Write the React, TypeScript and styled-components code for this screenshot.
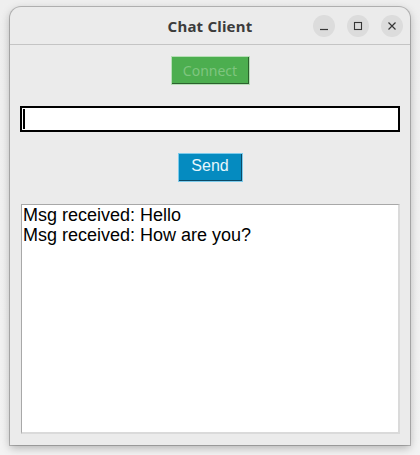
import React from "react";
import styled, { createGlobalStyle } from "styled-components";

const Global = createGlobalStyle`
  html, body { margin: 0; padding: 0; }
  body {
    width: 420px;
    height: 455px;
    background: #f4f4f4;
    overflow: hidden;
    font-family: "Liberation Sans", Arial, sans-serif;
  }
`;

const Page = styled.div`
  width: 420px;
  height: 455px;
  box-sizing: border-box;
  padding: 7px 10px 10px 10px;
  background: linear-gradient(#efefef, #f3f3f3);
`;

const Window = styled.div`
  width: 400px;
  height: 438px;
  display: flex;
  flex-direction: column;
  background: #ebebeb;
  border-radius: 11px 11px 0 0;
  box-shadow: 0 0 0 1px rgba(0, 0, 0, 0.22), 0 3px 10px rgba(0, 0, 0, 0.28);
`;

const TitleBar = styled.div`
  height: 37px;
  flex: none;
  display: grid;
  grid-template-columns: 1fr auto 1fr;
  align-items: center;
  border-bottom: 1px solid #c4c4c4;
`;

const Title = styled.div`
  grid-column: 2;
  font-family: "Noto Sans", "Open Sans", sans-serif;
  font-weight: 700;
  font-size: 15px;
  letter-spacing: 0.2px;
  color: #3c3c3c;
  margin-top: 1px;
`;

const Controls = styled.div`
  grid-column: 3;
  justify-self: end;
  display: flex;
  gap: 12px;
  padding-right: 7px;
  margin-top: 1px;
`;

const CtrlButton = styled.div`
  width: 22px;
  height: 22px;
  border-radius: 50%;
  background: #dcdcdc;
  display: flex;
  align-items: center;
  justify-content: center;
  color: #363636;
`;

const Body = styled.div`
  flex: 1;
  display: flex;
  flex-direction: column;
  align-items: center;
  padding: 11px 10px 11px 10px;
  min-height: 0;
`;

const TkButton = styled.div<{ $fill: string; $light: string; $dark: string; $text: string; $w: number; $font: string; $size: number; $lift: number }>`
  box-sizing: border-box;
  width: ${(p) => p.$w}px;
  height: 29px;
  flex: none;
  display: flex;
  align-items: center;
  justify-content: center;
  padding-bottom: ${(p) => p.$lift}px;
  background: ${(p) => p.$fill};
  border: 1px solid ${(p) => p.$light};
  box-shadow: inset -1px -1px 0 ${(p) => p.$dark};
  color: ${(p) => p.$text};
  font-family: ${(p) => p.$font};
  font-size: ${(p) => p.$size}px;
`;

const Entry = styled.div`
  box-sizing: border-box;
  align-self: stretch;
  height: 26px;
  margin-top: 21px;
  margin-bottom: 21px;
  flex: none;
  background: #ffffff;
  border: 2px solid #000000;
  display: flex;
  align-items: center;
  padding-left: 1px;
`;

const Caret = styled.span`
  width: 2px;
  height: 20px;
  background: #000;
`;

const Log = styled.div`
  box-sizing: border-box;
  align-self: stretch;
  margin-left: 1px;
  margin-top: 22px;
  flex: 1;
  background: #ffffff;
  border-top: 1px solid #a8a8a8;
  border-left: 1px solid #a8a8a8;
  border-right: 2px solid #dadada;
  border-bottom: 2px solid #dadada;
  padding: 0 0 0 1px;
  font-family: "Liberation Sans", Arial, sans-serif;
  font-size: 18px;
  line-height: 20px;
  color: #000;
`;

const Line = styled.div`
  white-space: pre;
`;

export default function App() {
  return (
    <>
      <Global />
      <Page>
        <Window>
          <TitleBar>
            <Title>Chat Client</Title>
            <Controls>
              <CtrlButton>
                <svg width="10" height="10" viewBox="0 0 10 10">
                  <line x1="1" y1="8.5" x2="9" y2="8.5" stroke="currentColor" strokeWidth="1.2" />
                </svg>
              </CtrlButton>
              <CtrlButton>
                <svg width="10" height="10" viewBox="0 0 10 10">
                  <rect x="1.5" y="1.5" width="7" height="7" fill="none" stroke="currentColor" strokeWidth="1.1" />
                </svg>
              </CtrlButton>
              <CtrlButton>
                <svg width="10" height="10" viewBox="0 0 10 10">
                  <path d="M1.5 1.5 L8.5 8.5 M8.5 1.5 L1.5 8.5" stroke="currentColor" strokeWidth="1.2" />
                </svg>
              </CtrlButton>
            </Controls>
          </TitleBar>
          <Body>
            <TkButton $fill="#4cae4f" $light="#b6dfb6" $dark="#2c612e" $text="#7fc57f" $w={79} $font={'"Noto Sans", "Open Sans", sans-serif'} $size={14} $lift={1}>
              Connect
            </TkButton>
            <Entry>
              <Caret />
            </Entry>
            <TkButton $fill="#058bc0" $light="#7ccbec" $dark="#0b4a66" $text="#e6f6fc" $w={65} $font={'"Liberation Sans", Arial, sans-serif'} $size={16} $lift={4}>
              Send
            </TkButton>
            <Log>
              <Line>Msg received: Hello</Line>
              <Line>Msg received: How are you?</Line>
            </Log>
          </Body>
        </Window>
      </Page>
    </>
  );
}
